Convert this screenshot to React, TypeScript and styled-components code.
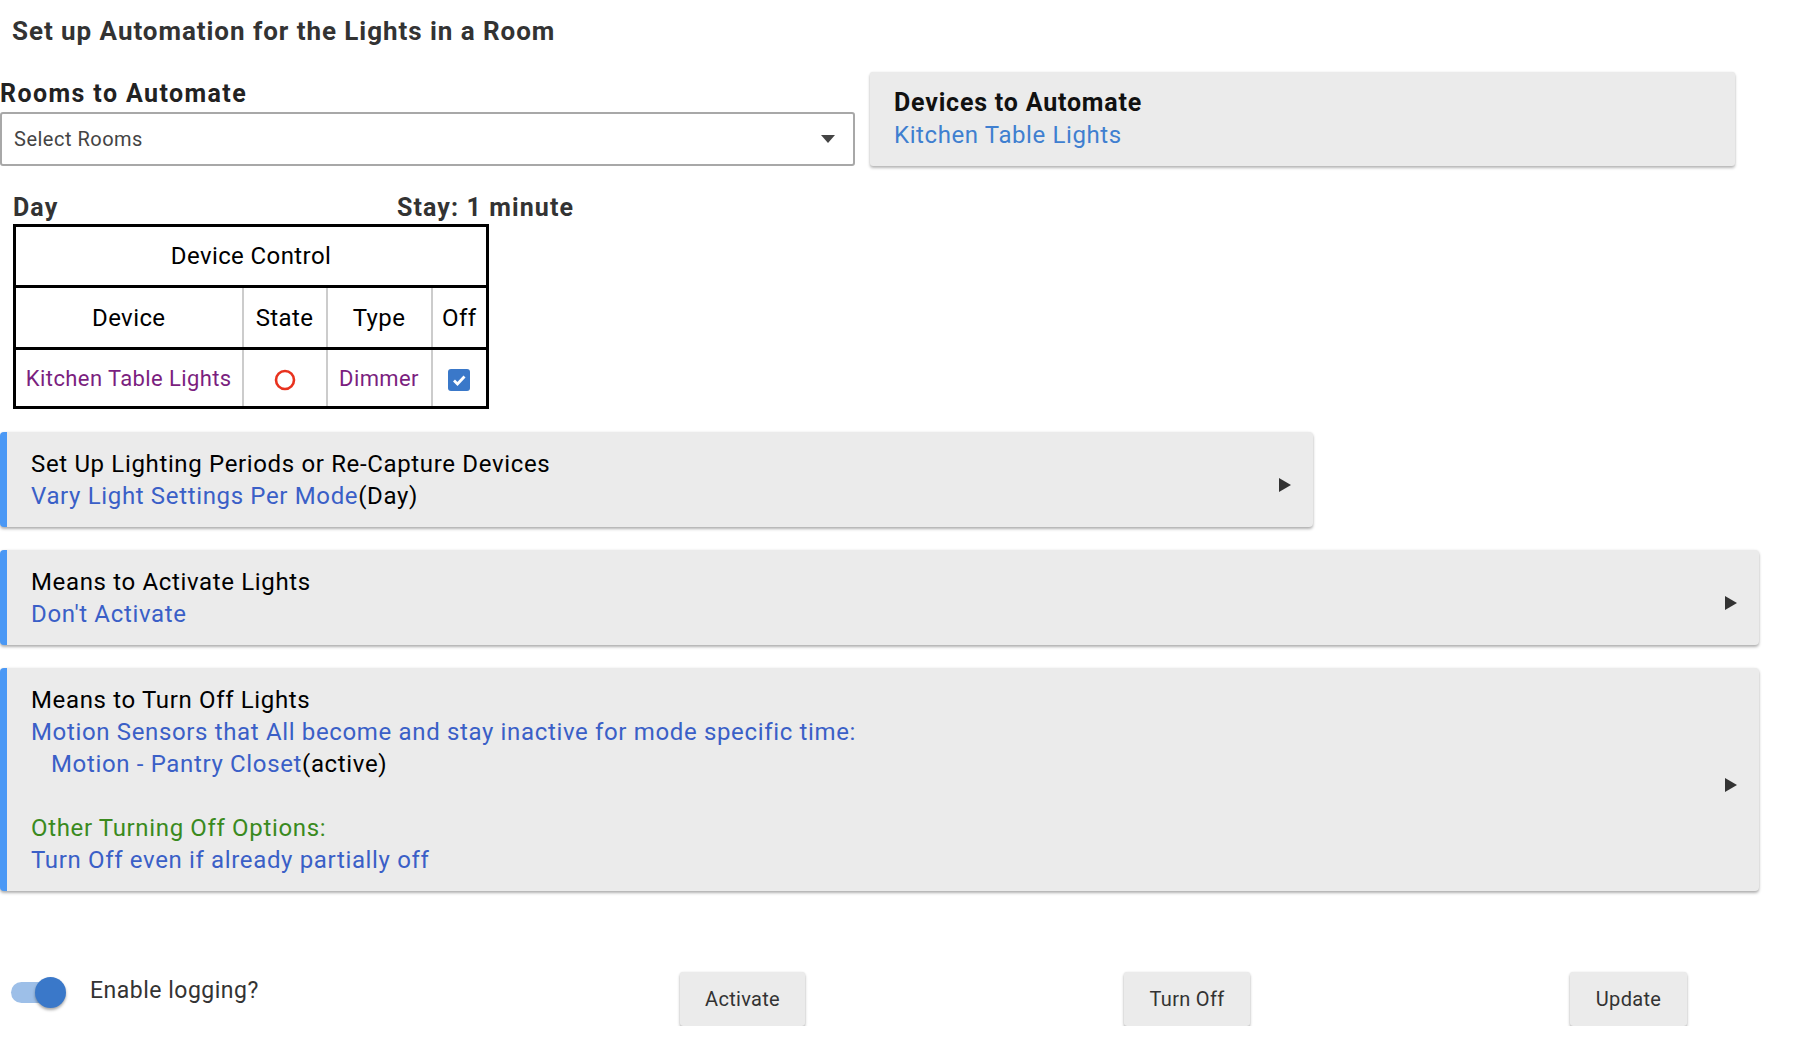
import React from 'react';
import styled, { createGlobalStyle } from 'styled-components';

const GlobalStyle = createGlobalStyle`
  body {
    margin: 0;
    background: #fff;
    font-family: Roboto, 'Liberation Sans', sans-serif;
    color: #000;
  }
`;

const Page = styled.div`
  width: 1759px;
  padding-top: 16px;
`;

const Title = styled.h1`
  margin: 0 0 0 12px;
  font-size: 26px;
  line-height: 30px;
  font-weight: 700;
  color: #333;
  letter-spacing: 0.95px;
`;

const TopRow = styled.div`
  display: grid;
  grid-template-columns: 855px 865px;
  column-gap: 15px;
  margin-top: 26px;
  align-items: start;
`;

const FieldLabel = styled.div`
  font-size: 25px;
  font-weight: 700;
  color: #222;
  line-height: 40px;
  height: 40px;
  padding-top: 2px;
  box-sizing: border-box;
  letter-spacing: 1.4px;
`;

const SelectBox = styled.div`
  box-sizing: border-box;
  height: 54px;
  border: 2px solid #a8a8a8;
  border-radius: 3px;
  display: flex;
  align-items: center;
  justify-content: space-between;
  padding: 0 18px 0 12px;
  font-size: 20px;
  letter-spacing: 0.5px;
  color: #444;
`;

const Panel = styled.div`
  box-sizing: border-box;
  height: 94px;
  background: #ebebeb;
  border-radius: 3px;
  box-shadow: 0 2px 3px rgba(0, 0, 0, 0.28), 0 0 2px rgba(0, 0, 0, 0.08);
  padding: 15px 24px 13px;
`;

const PanelTitle = styled.div`
  font-size: 25px;
  font-weight: 700;
  line-height: 32px;
  letter-spacing: 0.8px;
  color: #111;
`;

const Link = styled.span<{ $tone?: 'light' | 'dark' }>`
  color: ${(p) => (p.$tone === 'light' ? '#3f7fd0' : '#3a5fc7')};
`;

const PanelLink = styled.div`
  font-size: 24px;
  line-height: 32px;
  letter-spacing: 0.6px;
`;

const PeriodHead = styled.div`
  display: grid;
  grid-template-columns: 384px auto;
  margin: 28px 0 0 13px;
  font-size: 25px;
  font-weight: 700;
  color: #333;
  line-height: 28px;
  letter-spacing: 1.1px;
`;

const Table = styled.table`
  margin: 2px 0 0 13px;
  border-collapse: collapse;
  table-layout: fixed;
  width: 476px;
  border: 3px solid #000;
`;

const HeadCell = styled.th<{ $tall?: boolean }>`
  font-weight: 400;
  font-size: 24px;
  letter-spacing: 0.4px;
  height: ${(p) => (p.$tall ? '58px' : '59px')};
  padding: 0;
  text-align: center;
  border-bottom: 3px solid #000;
  border-left: 2px solid #ccc;
  &:first-child {
    border-left: none;
  }
`;

const Cell = styled.td<{ $purple?: boolean }>`
  height: 56px;
  padding: 0;
  font-size: 22px;
  letter-spacing: 0.4px;
  text-align: center;
  white-space: nowrap;
  border-left: 2px solid #ccc;
  color: ${(p) => (p.$purple ? '#7b1f80' : '#000')};
  &:first-child {
    border-left: none;
  }
`;

const Cards = styled.div`
  display: flex;
  flex-direction: column;
  align-items: flex-start;
  gap: 23px;
  margin-top: 23px;
`;

const Card = styled.div<{ $w: number }>`
  box-sizing: border-box;
  width: ${(p) => p.$w}px;
  display: flex;
  align-items: center;
  background: #ebebeb;
  border-left: 7px solid #4a98f5;
  border-radius: 4px;
  box-shadow: 0 2px 3px rgba(0, 0, 0, 0.3), 0 0 3px rgba(0, 0, 0, 0.06);
  padding: 16px 22px 15px 24px;
`;

const CardBody = styled.div`
  flex: 1;
  font-size: 24px;
  line-height: 32px;
  letter-spacing: 0.65px;
  color: #000;
`;

const Line = styled.div<{ $indent?: boolean; $green?: boolean }>`
  min-height: 32px;
  padding-left: ${(p) => (p.$indent ? '20px' : '0')};
  color: ${(p) => (p.$green ? '#3a8a1e' : 'inherit')};
`;

const Arrow = styled.svg`
  width: 12px;
  height: 14px;
  flex: none;
  margin-top: 9px;
`;

const BottomRow = styled.div`
  display: grid;
  grid-template-columns: 680px 444px 446px 1fr;
  align-items: center;
  margin-top: 81px;
`;

const ToggleWrap = styled.label`
  display: flex;
  align-items: center;
  gap: 33px;
  padding-left: 11px;
  font-size: 23px;
  letter-spacing: 0.5px;
  color: #333;
  margin-top: -14px;
`;

const ToggleText = styled.span`
  margin-top: -4px;
`;

const Track = styled.span`
  position: relative;
  display: inline-block;
  width: 46px;
  height: 21px;
  border-radius: 11px;
  background: #9dbfe8;
`;

const Thumb = styled.span`
  position: absolute;
  right: -9px;
  top: -5px;
  width: 31px;
  height: 31px;
  border-radius: 50%;
  background: #3a78c9;
  box-shadow: 0 2px 3px rgba(0, 0, 0, 0.35);
`;

const Button = styled.button<{ $w: number }>`
  justify-self: start;
  width: ${(p) => p.$w}px;
  height: 54px;
  padding: 0;
  border: none;
  border-radius: 3px;
  background: #ebebeb;
  box-shadow: 0 2px 3px rgba(0, 0, 0, 0.3), 0 0 2px rgba(0, 0, 0, 0.08);
  font-family: Roboto, 'Liberation Sans', sans-serif;
  font-size: 20px;
  letter-spacing: 0.3px;
  color: #333;
`;

const Triangle = () => (
  <Arrow viewBox="0 0 12 14">
    <path d="M0 0 L12 7 L0 14 Z" fill="#333" />
  </Arrow>
);

const Caret = () => (
  <svg width="14" height="8" viewBox="0 0 14 8">
    <path d="M0 0 H14 L7 8 Z" fill="#444" />
  </svg>
);

const Ring = () => (
  <svg width="22" height="22" viewBox="0 0 22 22" style={{ verticalAlign: 'middle' }}>
    <circle cx="11" cy="11" r="9" fill="none" stroke="#e8321e" strokeWidth="2.6" />
  </svg>
);

const Check = () => (
  <svg width="22" height="22" viewBox="0 0 22 22" style={{ verticalAlign: 'middle' }}>
    <rect x="0" y="0" width="22" height="22" rx="3" fill="#3a78c9" />
    <path d="M6 11.5 L9.5 15 L16.5 7.5" fill="none" stroke="#fff" strokeWidth="2.8" />
  </svg>
);

export default function App() {
  return (
    <Page>
      <GlobalStyle />
      <Title>Set up Automation for the Lights in a Room</Title>

      <TopRow>
        <div>
          <FieldLabel>Rooms to Automate</FieldLabel>
          <SelectBox>
            <span>Select Rooms</span>
            <Caret />
          </SelectBox>
        </div>
        <Panel>
          <PanelTitle>Devices to Automate</PanelTitle>
          <PanelLink>
            <Link $tone="light">Kitchen Table Lights</Link>
          </PanelLink>
        </Panel>
      </TopRow>

      <PeriodHead>
        <span>Day</span>
        <span>Stay: 1 minute</span>
      </PeriodHead>
      <Table>
        <colgroup>
          <col style={{ width: 228 }} />
          <col style={{ width: 84 }} />
          <col style={{ width: 105 }} />
          <col />
        </colgroup>
        <thead>
          <tr>
            <HeadCell colSpan={4} $tall>
              Device Control
            </HeadCell>
          </tr>
          <tr>
            <HeadCell>Device</HeadCell>
            <HeadCell>State</HeadCell>
            <HeadCell>Type</HeadCell>
            <HeadCell>Off</HeadCell>
          </tr>
        </thead>
        <tbody>
          <tr>
            <Cell $purple>Kitchen Table Lights</Cell>
            <Cell>
              <Ring />
            </Cell>
            <Cell $purple>Dimmer</Cell>
            <Cell>
              <Check />
            </Cell>
          </tr>
        </tbody>
      </Table>

      <Cards>
        <Card $w={1313}>
          <CardBody>
            <Line>Set Up Lighting Periods or Re-Capture Devices</Line>
            <Line>
              <Link>Vary Light Settings Per Mode</Link>(Day)
            </Line>
          </CardBody>
          <Triangle />
        </Card>
        <Card $w={1759}>
          <CardBody>
            <Line>Means to Activate Lights</Line>
            <Line>
              <Link>Don't Activate</Link>
            </Line>
          </CardBody>
          <Triangle />
        </Card>
        <Card $w={1759}>
          <CardBody>
            <Line>Means to Turn Off Lights</Line>
            <Line>
              <Link>Motion Sensors that All become and stay inactive for mode specific time:</Link>
            </Line>
            <Line $indent>
              <Link>Motion - Pantry Closet</Link>(active)
            </Line>
            <Line />
            <Line $green>Other Turning Off Options:</Line>
            <Line>
              <Link>Turn Off even if already partially off</Link>
            </Line>
          </CardBody>
          <Triangle />
        </Card>
      </Cards>

      <BottomRow>
        <ToggleWrap>
          <Track>
            <Thumb />
          </Track>
          <ToggleText>Enable logging?</ToggleText>
        </ToggleWrap>
        <Button $w={125}>Activate</Button>
        <Button $w={126}>Turn Off</Button>
        <Button $w={117}>Update</Button>
      </BottomRow>
    </Page>
  );
}
